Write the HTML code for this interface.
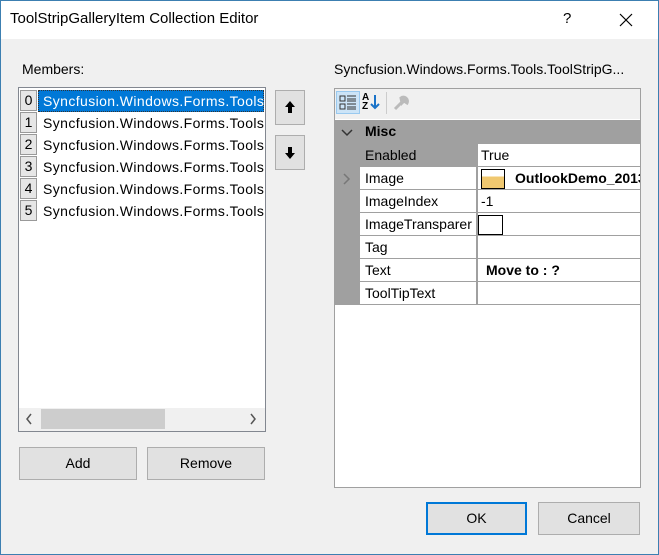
<!DOCTYPE html>
<html><head><style>
*{box-sizing:border-box;margin:0;padding:0}
body{width:659px;height:555px;background:#f0f0f0;font-family:"Segoe UI","Liberation Sans",sans-serif;font-size:14px;color:#000;position:relative;overflow:hidden}
.abs{position:absolute}
.win{left:0;top:0;width:659px;height:555px;border:1px solid #3c7fb1}
.title{left:1px;top:1px;width:657px;height:38px;background:#fff}
.btn{position:absolute;background:#e1e1e1;border:1px solid #adadad;text-align:center;line-height:30px;font-size:14px}
.idx{position:absolute;left:20px;width:17px;height:21px;background:#e6e6e6;border:1px solid #999;text-align:center;line-height:19px;font-size:14px}
.item{position:absolute;left:40px;height:21px;line-height:21px;white-space:nowrap;font-size:14px;letter-spacing:0.4px}
.row{position:absolute;left:360px;width:280px;height:23px;border-bottom:1px solid #a0a0a0}
.lab{position:absolute;left:0;top:0;width:117px;height:22px;background:#fff;line-height:22px;padding-left:5px;border-right:1px solid #a0a0a0}
.val{position:absolute;left:118px;top:0;height:22px;line-height:22px;padding-left:3px;white-space:nowrap;overflow:hidden;width:162px}
</style></head><body>
<div class="abs win"></div>
<div class="abs title"></div>
<div class="abs" style="left:10px;top:10px;font-size:15px">ToolStripGalleryItem Collection Editor</div>
<div class="abs" style="left:563px;top:10px;font-size:15px">?</div>
<svg class="abs" style="left:619px;top:13px" width="14" height="14"><path d="M1 1L13 13M13 1L1 13" stroke="#000" stroke-width="1.2"/></svg>
<div class="abs" style="left:22px;top:61px">Members:</div>
<div class="abs" style="left:334px;top:61px;white-space:nowrap">Syncfusion.Windows.Forms.Tools.ToolStripG...</div>

<div class="abs" style="left:18px;top:87px;width:248px;height:345px;background:#fff;border:1px solid #828790;overflow:hidden"></div>
<div class="abs" style="left:38px;top:90px;width:226px;height:22px;background:#0078d7;border:1px dotted #333"></div>
<div class="idx" style="top:90px">0</div>
<div class="idx" style="top:112px">1</div>
<div class="idx" style="top:134px">2</div>
<div class="idx" style="top:156px">3</div>
<div class="idx" style="top:178px">4</div>
<div class="idx" style="top:200px">5</div>
<div class="abs" style="left:38px;top:90px;width:226px;height:140px;overflow:hidden">
<div class="item" style="left:5px;top:1px;color:#fff">Syncfusion.Windows.Forms.Tools</div>
<div class="item" style="left:5px;top:23px">Syncfusion.Windows.Forms.Tools</div>
<div class="item" style="left:5px;top:45px">Syncfusion.Windows.Forms.Tools</div>
<div class="item" style="left:5px;top:67px">Syncfusion.Windows.Forms.Tools</div>
<div class="item" style="left:5px;top:89px">Syncfusion.Windows.Forms.Tools</div>
<div class="item" style="left:5px;top:111px">Syncfusion.Windows.Forms.Tools</div>
</div>
<div class="abs" style="left:19px;top:408px;width:246px;height:23px;background:#f0f0f0"></div>
<div class="abs" style="left:41px;top:409px;width:124px;height:20px;background:#cdcdcd"></div>
<svg class="abs" style="left:25px;top:413px" width="8" height="12"><path d="M6 1L2 6L6 11" stroke="#555" stroke-width="1.5" fill="none"/></svg>
<svg class="abs" style="left:249px;top:413px" width="8" height="12"><path d="M2 1L6 6L2 11" stroke="#555" stroke-width="1.5" fill="none"/></svg>

<div class="btn" style="left:275px;top:90px;width:30px;height:35px"></div>
<div class="btn" style="left:275px;top:135px;width:30px;height:35px"></div>
<svg class="abs" style="left:284px;top:100px" width="12" height="14"><path d="M6 1L1 7H4V13H8V7H11Z" fill="#000"/></svg>
<svg class="abs" style="left:284px;top:146px" width="12" height="14"><path d="M6 13L1 7H4V1H8V7H11Z" fill="#000"/></svg>

<div class="btn" style="left:19px;top:447px;width:118px;height:33px">Add</div>
<div class="btn" style="left:147px;top:447px;width:118px;height:33px">Remove</div>

<div class="abs" style="left:334px;top:88px;width:307px;height:400px;background:#fff;border:1px solid #a0a0a0"></div>
<div class="abs" style="left:335px;top:89px;width:305px;height:30px;background:#f0f0f0"></div>
<div class="abs" style="left:336px;top:91px;width:24px;height:23px;background:#cce4f7;border:1px solid #99c9ef"></div>
<svg class="abs" style="left:339px;top:94px" width="18" height="18"><rect x="1" y="2" width="5" height="5" fill="none" stroke="#333"/><rect x="1" y="10" width="5" height="5" fill="none" stroke="#333"/><path d="M8 2H17M8 5H17M8 7H17M8 10H17M8 13H17M8 15H17" stroke="#333"/></svg>
<div class="abs" style="left:362px;top:93px;font-size:10px;font-weight:bold;line-height:9px">A<br>Z</div>
<svg class="abs" style="left:370px;top:94px" width="10" height="16"><path d="M5 1V14M1 10L5 14L9 10" stroke="#1a73c8" stroke-width="2" fill="none"/></svg>
<div class="abs" style="left:386px;top:92px;width:1px;height:22px;background:#ccc"></div>
<svg class="abs" style="left:393px;top:95px" width="16" height="16"><path d="M2 14L9 7M8 3A4 4 0 0 1 14 8L11 6L9 8Z" stroke="#bbb" stroke-width="3" fill="#bbb"/></svg>

<div class="abs" style="left:335px;top:120px;width:305px;height:185px;background:#a0a0a0"></div>
<svg class="abs" style="left:341px;top:129px" width="12" height="8"><path d="M1 1L6 6L11 1" stroke="#333" stroke-width="1.5" fill="none"/></svg>
<div class="abs" style="left:365px;top:123px;font-weight:bold">Misc</div>
<div class="row" style="top:144px"><div class="lab" style="background:#a0a0a0">Enabled</div><div class="val" style="background:#fff">True</div></div>
<div class="row" style="top:167px"><div class="lab">Image</div><div class="val" style="background:#fff"><span style="display:inline-block;width:24px;height:20px;border:1px solid #000;vertical-align:middle;background:linear-gradient(#fff 35%,#f0c870 35%)"></span><b style="margin-left:10px">OutlookDemo_2013</b></div></div>
<svg class="abs" style="left:343px;top:173px" width="8" height="12"><path d="M1 1L6 6L1 11" stroke="#777" stroke-width="1.5" fill="none"/></svg>
<div class="row" style="top:190px"><div class="lab">ImageIndex</div><div class="val" style="background:#fff">-1</div></div>
<div class="row" style="top:213px"><div class="lab">ImageTransparer</div><div class="val" style="background:#fff"><span style="display:inline-block;width:25px;height:20px;border:1px solid #000;vertical-align:middle;margin-left:-3px"></span></div></div>
<div class="row" style="top:236px"><div class="lab">Tag</div><div class="val" style="background:#fff"></div></div>
<div class="row" style="top:259px"><div class="lab">Text</div><div class="val" style="background:#fff"><b style="margin-left:5px">Move to : ?</b></div></div>
<div class="row" style="top:282px"><div class="lab">ToolTipText</div><div class="val" style="background:#fff"></div></div>

<div class="btn" style="left:426px;top:502px;width:101px;height:33px;border:2px solid #0078d7;line-height:29px">OK</div>
<div class="btn" style="left:538px;top:502px;width:102px;height:33px">Cancel</div>
</body></html>
